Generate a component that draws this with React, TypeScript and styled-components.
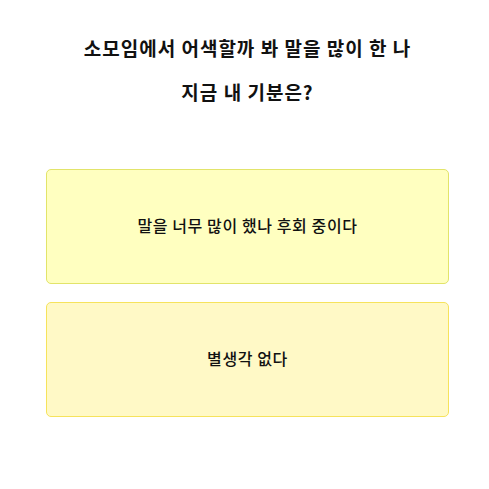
import styled, { createGlobalStyle } from "styled-components";

const GlobalStyle = createGlobalStyle`
  html, body {
    margin: 0;
    padding: 0;
    background: #ffffff;
  }

  body {
    font-family: "Noto Sans CJK KR", "Noto Sans", sans-serif;
    color: #111111;
  }
`;

const Page = styled.main`
  width: 489px;
  min-height: 489px;
  padding: 26px 0 0 46px;
  box-sizing: border-box;
`;

const Question = styled.h1`
  width: 403px;
  margin: 0 0 55px;
  font-size: 19px;
  font-weight: 700;
  line-height: 44px;
  text-align: center;
  letter-spacing: 1px;
`;

const Choices = styled.div`
  width: 403px;
  display: flex;
  flex-direction: column;
  gap: 18px;
`;

const Choice = styled.button<{ $tone: "lime" | "cream" }>`
  height: 115px;
  padding: 0 0 4px;
  display: flex;
  align-items: center;
  justify-content: center;
  border-radius: 5px;
  border: 1px solid ${({ $tone }) => ($tone === "lime" ? "#e2e46a" : "#f6e35c")};
  background: ${({ $tone }) => ($tone === "lime" ? "#ffffc0" : "#fff9c6")};
  font-family: inherit;
  font-size: 16px;
  font-weight: 500;
  letter-spacing: 0.6px;
  color: #111111;
  cursor: pointer;
`;

const App = () => {
  return (
    <>
      <GlobalStyle />
      <Page>
        <Question>
          소모임에서 어색할까 봐 말을 많이 한 나
          <br />
          지금 내 기분은?
        </Question>
        <Choices>
          <Choice $tone="lime">말을 너무 많이 했나 후회 중이다</Choice>
          <Choice $tone="cream">별생각 없다</Choice>
        </Choices>
      </Page>
    </>
  );
};

export default App;
